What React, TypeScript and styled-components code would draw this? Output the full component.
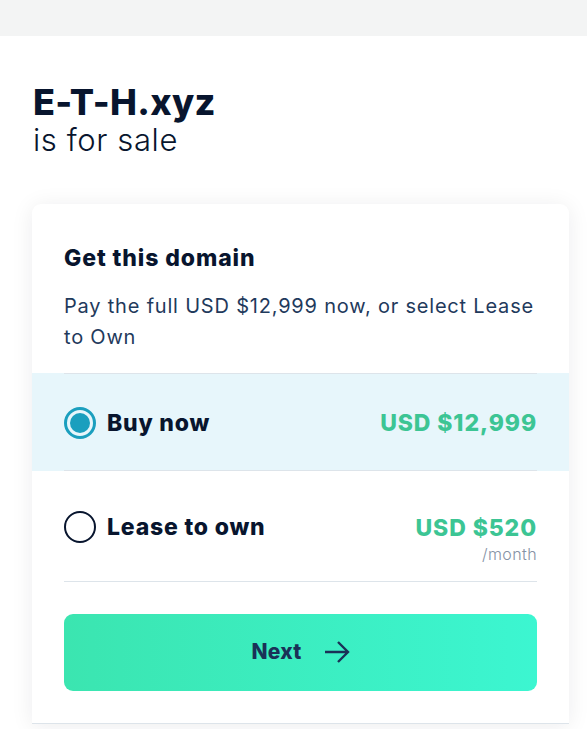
import React, { useState } from "react";
import styled, { createGlobalStyle } from "styled-components";

const Global = createGlobalStyle`
  html, body { margin: 0; padding: 0; background: #ffffff; }
  body { font-family: Inter, "Noto Sans", sans-serif; color: #0a1931; overflow: hidden; }
  * { box-sizing: border-box; }
`;

const Page = styled.div`
  width: 587px;
  min-height: 729px;
  display: flex;
  flex-direction: column;
`;

const TopBand = styled.div`
  height: 36px;
  background: #f3f4f4;
`;

const Hero = styled.div`
  padding: 46px 32px 46px 33px;
  display: flex;
  flex-direction: column;
`;

const DomainName = styled.h1`
  margin: 0;
  font-size: 36px;
  line-height: 40px;
  font-weight: 800;
  letter-spacing: 0.3px;
  color: #08152e;
`;

const ForSale = styled.div`
  font-size: 31px;
  line-height: 36px;
  font-weight: 300;
  letter-spacing: 0.6px;
  color: #08152e;
`;

const Card = styled.section`
  margin-left: 32px;
  width: 537px;
  background: #ffffff;
  border-radius: 9px 9px 0 0;
  box-shadow: 0 2px 22px rgba(20, 30, 40, 0.08);
  display: flex;
  flex-direction: column;
`;

const CardHeader = styled.div`
  padding: 39px 32px 20px;
`;

const CardTitle = styled.h2`
  margin: 0 0 18px;
  font-size: 23px;
  line-height: 30px;
  font-weight: 800;
  letter-spacing: 0.9px;
  color: #08152e;
`;

const CardText = styled.p`
  margin: 0;
  font-size: 20px;
  line-height: 31px;
  font-weight: 400;
  letter-spacing: 0.8px;
  color: #1f3a5c;
`;

const OptionRow = styled.label<{ $active?: boolean }>`
  display: block;
  padding: 0 32px;
  background: ${(p) => (p.$active ? "#e7f6fb" : "#ffffff")};
  cursor: pointer;
`;

const OptionInner = styled.div<{ $top?: boolean; $tall?: boolean }>`
  display: flex;
  align-items: ${(p) => (p.$tall ? "flex-start" : "center")};
  justify-content: space-between;
  height: ${(p) => (p.$tall ? "111px" : "98px")};
  padding-top: ${(p) => (p.$tall ? "40px" : "2px")};
  border-top: ${(p) => (p.$top ? "1px solid #dde4ea" : "none")};
  border-bottom: 1px solid #dde4ea;
`;

const OptionLeft = styled.div`
  display: flex;
  align-items: center;
  gap: 11px;
`;

const Radio = styled.span<{ $checked?: boolean }>`
  width: 32px;
  height: 32px;
  border-radius: 50%;
  border: ${(p) => (p.$checked ? "3px solid #1b9fbe" : "2.5px solid #08152e")};
  display: flex;
  align-items: center;
  justify-content: center;
  background: transparent;
  &::after {
    content: "";
    width: 20px;
    height: 20px;
    border-radius: 50%;
    background: ${(p) => (p.$checked ? "#1b9fbe" : "transparent")};
  }
`;

const OptionLabel = styled.span`
  font-size: 23px;
  font-weight: 800;
  letter-spacing: 0.8px;
  color: #08152e;
`;

const PriceBox = styled.div`
  display: flex;
  flex-direction: column;
  align-items: flex-end;
  padding-top: 3px;
`;

const Price = styled.span`
  font-size: 23px;
  line-height: 28px;
  font-weight: 800;
  color: #3cc594;
  letter-spacing: 0.9px;
`;

const PerMonth = styled.span`
  font-size: 16px;
  line-height: 24px;
  font-weight: 300;
  letter-spacing: 0.4px;
  color: #8592a5;
`;

const Footer = styled.div`
  padding: 32px;
  border-bottom: 1px solid #dde4ea;
`;

const NextButton = styled.button`
  width: 100%;
  height: 77px;
  border: none;
  border-radius: 9px;
  background: linear-gradient(90deg, #3be5b0 0%, #3cf6d1 100%);
  display: flex;
  align-items: center;
  justify-content: center;
  gap: 22px;
  font-family: Inter, "Noto Sans", sans-serif;
  font-size: 21px;
  font-weight: 800;
  letter-spacing: 0.3px;
  color: #1a3157;
  cursor: pointer;
  padding: 0 0 2px 0;
`;

const Arrow = () => (
  <svg width="26" height="24" viewBox="0 0 26 24" fill="none">
    <path d="M1 12H24M14 2L24 12L14 22" stroke="#1a3157" strokeWidth="2.4" />
  </svg>
);

export default function App() {
  const [choice, setChoice] = useState<"buy" | "lease">("buy");
  return (
    <Page>
      <Global />
      <TopBand />
      <Hero>
        <DomainName>E-T-H.xyz</DomainName>
        <ForSale>is for sale</ForSale>
      </Hero>
      <Card>
        <CardHeader>
          <CardTitle>Get this domain</CardTitle>
          <CardText>Pay the full USD $12,999 now, or select Lease to Own</CardText>
        </CardHeader>
        <OptionRow $active={choice === "buy"} onClick={() => setChoice("buy")}>
          <OptionInner $top>
            <OptionLeft>
              <Radio $checked={choice === "buy"} />
              <OptionLabel>Buy now</OptionLabel>
            </OptionLeft>
            <Price>USD $12,999</Price>
          </OptionInner>
        </OptionRow>
        <OptionRow $active={choice === "lease"} onClick={() => setChoice("lease")}>
          <OptionInner $tall>
            <OptionLeft>
              <Radio $checked={choice === "lease"} />
              <OptionLabel>Lease to own</OptionLabel>
            </OptionLeft>
            <PriceBox>
              <Price>USD $520</Price>
              <PerMonth>/month</PerMonth>
            </PriceBox>
          </OptionInner>
        </OptionRow>
        <Footer>
          <NextButton>
            Next
            <Arrow />
          </NextButton>
        </Footer>
      </Card>
    </Page>
  );
}
